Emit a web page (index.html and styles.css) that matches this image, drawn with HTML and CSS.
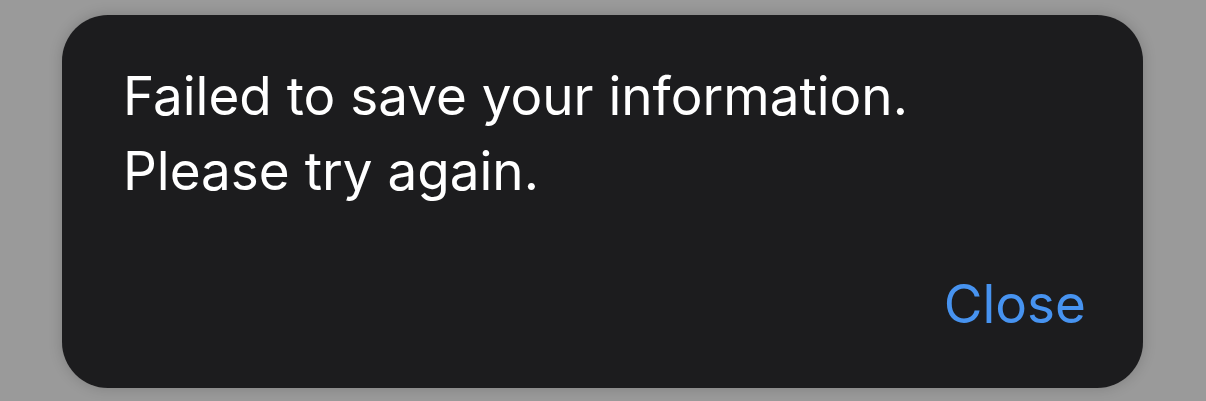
FILE: index.html
```html
<!DOCTYPE html>
<html lang="en">
<head>
<meta charset="utf-8">
<title>Alert</title>
<link rel="stylesheet" href="styles.css">
</head>
<body>
  <div class="stage">
    <div class="alert" role="alertdialog">
      <p class="alert-message">Failed to save your information.<br>Please try again.</p>
      <div class="alert-actions">
        <button class="alert-button" type="button">Close</button>
      </div>
    </div>
  </div>
</body>
</html>
```

FILE: styles.css
```css
html, body {
  margin: 0;
  padding: 0;
}

body {
  background: #9a9a9a;
  font-family: Inter, "Noto Sans", sans-serif;
  width: 1206px;
  height: 401px;
  overflow: hidden;
}

.stage {
  padding: 15px 63px 0 62px;
}

.alert {
  box-sizing: border-box;
  height: 373px;
  background: #1c1c1e;
  border-radius: 46px;
  box-shadow: 0 0 14px rgba(0, 0, 0, 0.18);
  padding: 44px 57px 56px 61px;
  display: flex;
  flex-direction: column;
  justify-content: space-between;
}

.alert-message {
  margin: 0;
  color: #ffffff;
  font-size: 53px;
  line-height: 75px;
  letter-spacing: 0;
}

.alert-actions {
  display: flex;
  justify-content: flex-end;
}

.alert-button {
  border: 0;
  background: none;
  padding: 0;
  font-family: inherit;
  font-size: 53px;
  line-height: 56px;
  color: #4793f0;
  cursor: pointer;
}
```
